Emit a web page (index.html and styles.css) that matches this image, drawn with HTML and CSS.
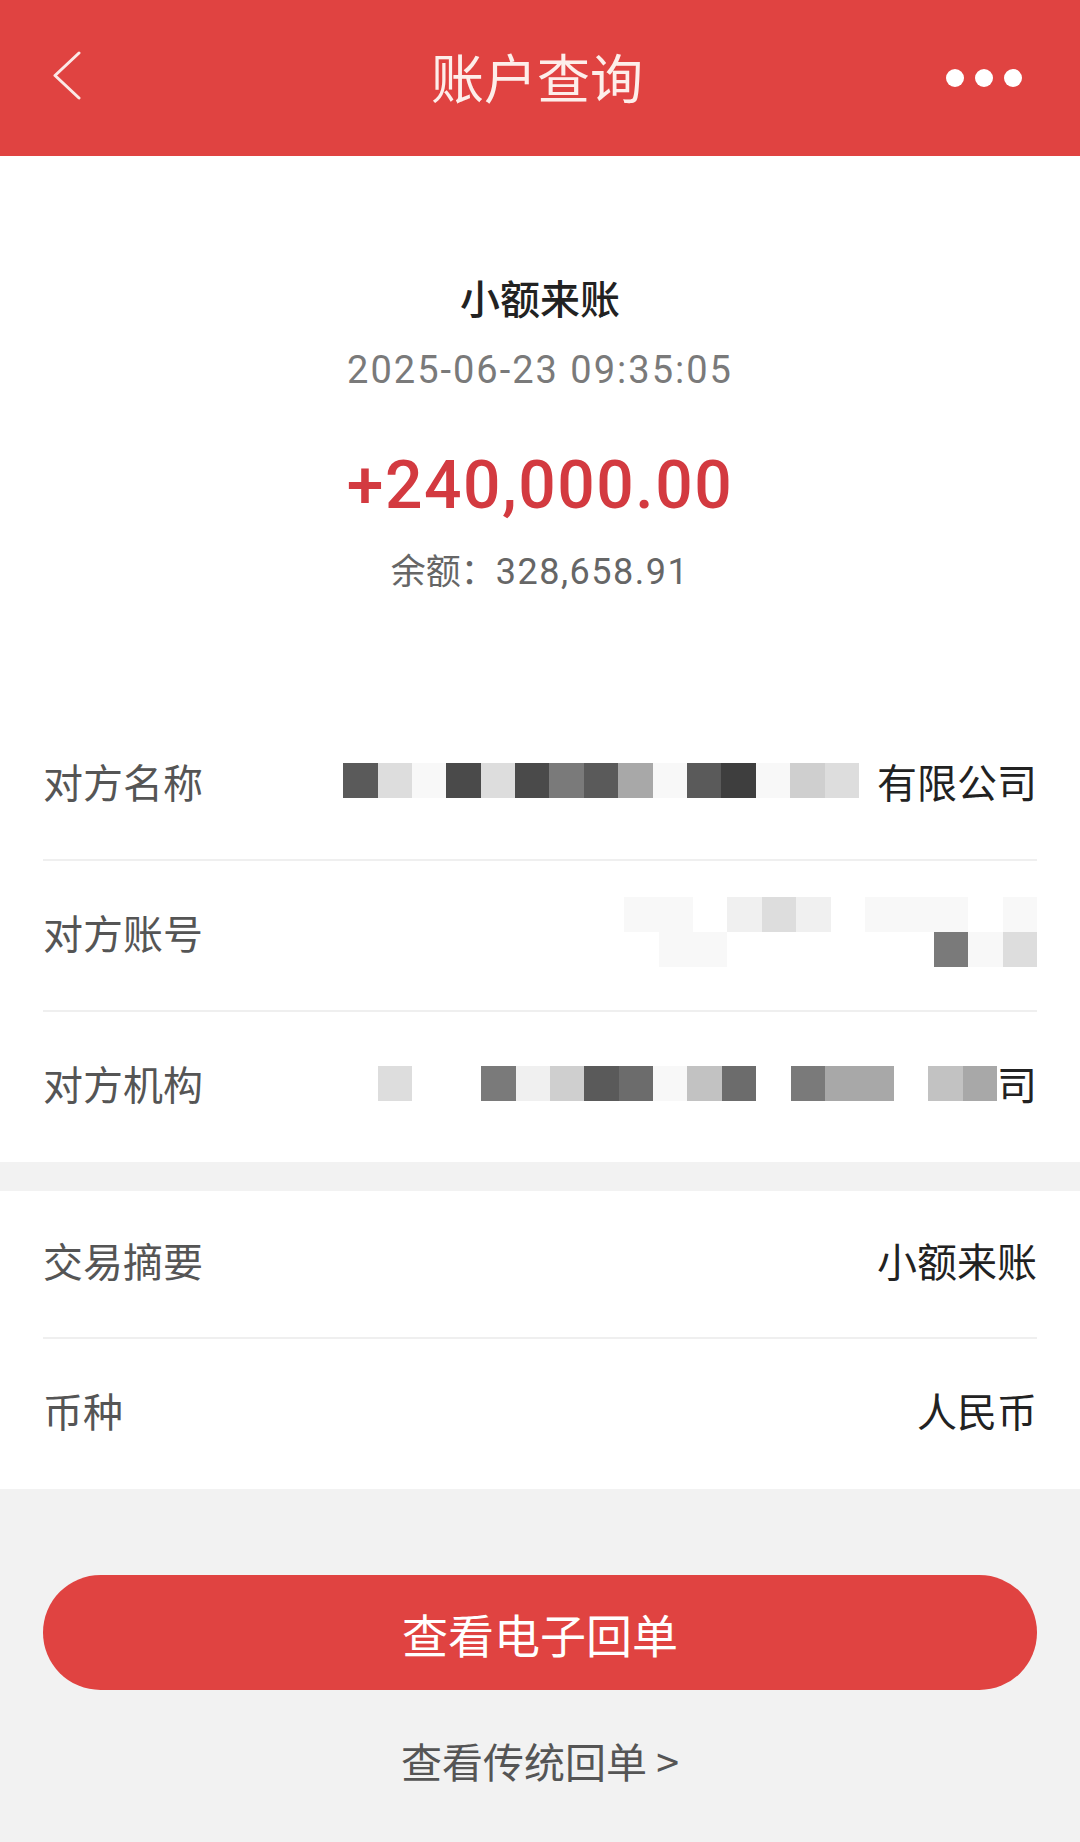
FILE: index.html
```html
<!DOCTYPE html>
<html lang="zh-CN">
<head>
<meta charset="utf-8">
<title>账户查询</title>
<link rel="stylesheet" href="styles.css">
</head>
<body>
<div class="page">
  <header class="nav">
    <span class="nav-back">
      <svg width="30" height="50" viewBox="0 0 30 50"><polyline points="27,2 3,24.5 27,47" fill="none" stroke="#fbe9e7" stroke-width="3" stroke-linecap="round" stroke-linejoin="round"/></svg>
    </span>
    <h1 class="nav-title">账户查询</h1>
    <span class="nav-more"><i></i><i></i><i></i></span>
  </header>

  <section class="summary">
    <div class="sum-type">小额来账</div>
    <div class="sum-time num">2025-06-23 09:35:05</div>
    <div class="sum-amount num">+240,000.00</div>
    <div class="sum-balance"><span class="cjk">余额：</span><span class="num">328,658.91</span></div>
  </section>

  <section class="group">
    <div class="row">
      <span class="label">对方名称</span>
      <span class="value">
        <span class="mosaic gap">
          <i class="i"></i><i class="c"></i><i class="a"></i><i class="j"></i><i class="c"></i><i class="j"></i><i class="g"></i><i class="i"></i><i class="f"></i><i class="a"></i><i class="i"></i><i class="k"></i><i class="a"></i><i class="d"></i><i class="c"></i>
        </span>有限公司
      </span>
    </div>
    <div class="row">
      <span class="label">对方账号</span>
      <span class="value">
        <span class="mosaic two">
          <i class="a"></i><i class="a"></i><i class="w"></i><i class="b"></i><i class="c"></i><i class="b"></i><i class="w"></i><i class="a"></i><i class="a"></i><i class="a"></i><i class="w"></i><i class="a"></i>
          <i class="w"></i><i class="a"></i><i class="a"></i><i class="w"></i><i class="w"></i><i class="w"></i><i class="w"></i><i class="w"></i><i class="w"></i><i class="g"></i><i class="a"></i><i class="c"></i>
        </span>
      </span>
    </div>
    <div class="row">
      <span class="label">对方机构</span>
      <span class="value">
        <span class="mosaic">
          <i class="c"></i><i class="w"></i><i class="w"></i><i class="g"></i><i class="b"></i><i class="d"></i><i class="i"></i><i class="h"></i><i class="a"></i><i class="e"></i><i class="h"></i><i class="w"></i><i class="g"></i><i class="f"></i><i class="f"></i><i class="w"></i><i class="e"></i><i class="f"></i>
        </span>司
      </span>
    </div>
  </section>

  <section class="group second">
    <div class="row">
      <span class="label">交易摘要</span>
      <span class="value">小额来账</span>
    </div>
    <div class="row">
      <span class="label">币种</span>
      <span class="value">人民币</span>
    </div>
  </section>

  <div class="actions">
    <button class="btn-primary" type="button">查看电子回单</button>
    <a class="link">查看传统回单 &gt;</a>
  </div>
</div>
</body>
</html>
```

FILE: styles.css
```css
html, body {
  margin: 0;
  padding: 0;
}

body {
  background: #f2f2f2;
  font-family: "Noto Sans CJK SC", sans-serif;
}

.page {
  width: 1080px;
  min-height: 1842px;
  background: #f2f2f2;
}

/* Top bar */
.nav {
  height: 156px;
  box-sizing: border-box;
  padding: 0 58px 4px 52px;
  background: #e04341;
  display: flex;
  align-items: center;
}

.nav-back {
  width: 76px;
  height: 50px;
  display: flex;
  align-items: center;
}

.nav-back svg {
  display: block;
}

.nav-title {
  flex: 1;
  margin: 0;
  text-align: center;
  font-family: "Noto Sans CJK SC", sans-serif;
  font-size: 53px;
  font-weight: 400;
  line-height: 1;
  color: #fdeeea;
}

.nav-more {
  width: 76px;
  display: flex;
  justify-content: flex-end;
  gap: 11px;
  padding-top: 4px;
}

.nav-more i {
  width: 18px;
  height: 18px;
  border-radius: 50%;
  background: #fff;
}

/* Summary */
.summary {
  background: #fff;
  padding: 113px 0 113px;
  text-align: center;
}

.num {
  font-family: "Roboto", "Noto Sans CJK SC", sans-serif;
}

.sum-type {
  font-size: 40px;
  line-height: 56px;
  font-weight: 500;
  color: #222;
}

.sum-time {
  margin-top: 20px;
  font-size: 38px;
  line-height: 50px;
  letter-spacing: 2px;
  color: #7a7a7a;
}

.sum-amount {
  margin-top: 46px;
  font-size: 66px;
  line-height: 90px;
  font-weight: 500;
  letter-spacing: 1.5px;
  color: #d33a40;
}

.sum-balance {
  margin-top: 12px;
  font-size: 36px;
  line-height: 50px;
  color: #666;
}

.sum-balance .cjk {
  font-size: 35px;
}

.sum-balance .num {
  letter-spacing: 1.5px;
}

/* Detail groups */
.group {
  background: #fff;
}

.group + .group {
  margin-top: 29px;
}

.row {
  height: 151px;
  box-sizing: border-box;
  margin: 0 43px;
  padding-bottom: 8px;
  border-bottom: 2px solid #efefef;
  display: flex;
  align-items: center;
  justify-content: space-between;
}

.row:last-child {
  border-bottom: none;
  height: 150px;
}

.second .row:first-child {
  height: 148px;
}

.label {
  font-size: 40px;
  color: #555;
}

.value {
  font-size: 40px;
  color: #222;
  display: flex;
  align-items: center;
}

/* Privacy mosaic */
.mosaic {
  display: grid;
  grid-template-rows: 35px;
  grid-auto-flow: column;
  grid-auto-columns: 34.4px;
}

.mosaic.gap {
  margin-right: 18px;
}

.mosaic.two {
  grid-template-rows: repeat(2, 35px);
  grid-template-columns: repeat(12, 34.4px);
  grid-auto-flow: row;
}

.mosaic i { display: block; }
.mosaic .w { background: #ffffff; }
.mosaic .a { background: #f8f8f8; }
.mosaic .b { background: #f0f0f0; }
.mosaic .c { background: #dddddd; }
.mosaic .d { background: #cfcfcf; }
.mosaic .e { background: #c2c2c2; }
.mosaic .f { background: #a8a8a8; }
.mosaic .g { background: #7a7a7a; }
.mosaic .h { background: #6c6c6c; }
.mosaic .i { background: #5a5a5a; }
.mosaic .j { background: #4a4a4a; }
.mosaic .k { background: #3e3e3e; }

/* Actions */
.actions {
  padding: 86px 43px 0;
  display: flex;
  flex-direction: column;
  align-items: center;
}

.btn-primary {
  width: 100%;
  height: 115px;
  border: none;
  border-radius: 58px;
  background: #e04341;
  color: #fff;
  font-family: "Noto Sans CJK SC", sans-serif;
  font-size: 46px;
  padding: 0;
}

.link {
  margin-top: 40px;
  font-size: 41px;
  line-height: 60px;
  color: #555;
}
```
